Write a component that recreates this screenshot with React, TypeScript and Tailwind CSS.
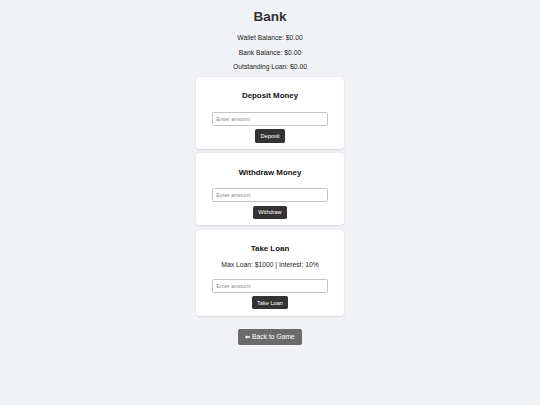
import { useState } from 'react';

type Action = {
  id: string;
  title: string;
  note?: string;
  button: string;
};

const actions: Action[] = [
  { id: 'deposit', title: 'Deposit Money', button: 'Deposit' },
  { id: 'withdraw', title: 'Withdraw Money', button: 'Withdraw' },
  { id: 'loan', title: 'Take Loan', note: 'Max Loan: $1000 | Interest: 10%', button: 'Take Loan' },
];

function ActionCard({ action }: { action: Action }) {
  const [amount, setAmount] = useState('');

  return (
    <div className="flex w-[147.5px] flex-col items-center rounded-[3.4px] bg-white px-[6.3px] pb-[6.3px] pt-[14.2px] shadow-[0_0.8px_2px_rgba(0,0,0,0.12)]">
      <h3 className="text-[7.9px] font-bold leading-[9.1px] text-[#111]">{action.title}</h3>
      {action.note && (
        <p className="mt-[7.9px] text-[6.75px] leading-[7.76px] text-[#222]">{action.note}</p>
      )}
      <input
        value={amount}
        onChange={(e) => setAmount(e.target.value)}
        placeholder="Enter amount"
        className={`${action.note ? 'mt-[10.1px]' : 'mt-[11.4px]'} h-[14px] w-[116.6px] rounded-[1.7px] border border-[#c4c4c4] bg-white px-[3.6px] text-[5.625px] leading-[6.5px] text-[#333] outline-none placeholder:text-[#8a8a8a]`}
      />
      <button className="mt-[3.6px] rounded-[1.7px] bg-[#333] px-[5px] py-[3.4px] text-[5.625px] leading-[6.5px] text-white">
        {action.button}
      </button>
    </div>
  );
}

export default function App() {
  return (
    <div className="flex min-h-screen flex-col items-center bg-[#f0f2f5] font-['Liberation_Sans',Arial,sans-serif] text-[#222]">
      <h1 className="mt-[9px] text-[13.5px] font-bold leading-[15.5px] text-[#333]">Bank</h1>
      <p className="mt-[9.5px] text-[6.75px] leading-[7.76px]">Wallet Balance: $0.00</p>
      <p className="mt-[6.75px] text-[6.75px] leading-[7.76px]">Bank Balance: $0.00</p>
      <p className="mt-[6.75px] text-[6.75px] leading-[7.76px]">Outstanding Loan: $0.00</p>

      <div className="mt-[6.3px] flex flex-col gap-[4.4px]">
        {actions.map((action) => (
          <ActionCard key={action.id} action={action} />
        ))}
      </div>

      <button className="mt-[13.3px] flex items-center gap-[1.8px] rounded-[2px] bg-[#6b6b6b] px-[7.2px] py-[4.3px] text-[6.75px] leading-[7.76px] text-white">
        <svg width="5" height="4" viewBox="0 0 10 8" aria-hidden="true">
          <path d="M0 4 L4 0.5 V2.6 H10 V5.4 H4 V7.5 Z" fill="currentColor" />
        </svg>
        <span>Back to Game</span>
      </button>
    </div>
  );
}
